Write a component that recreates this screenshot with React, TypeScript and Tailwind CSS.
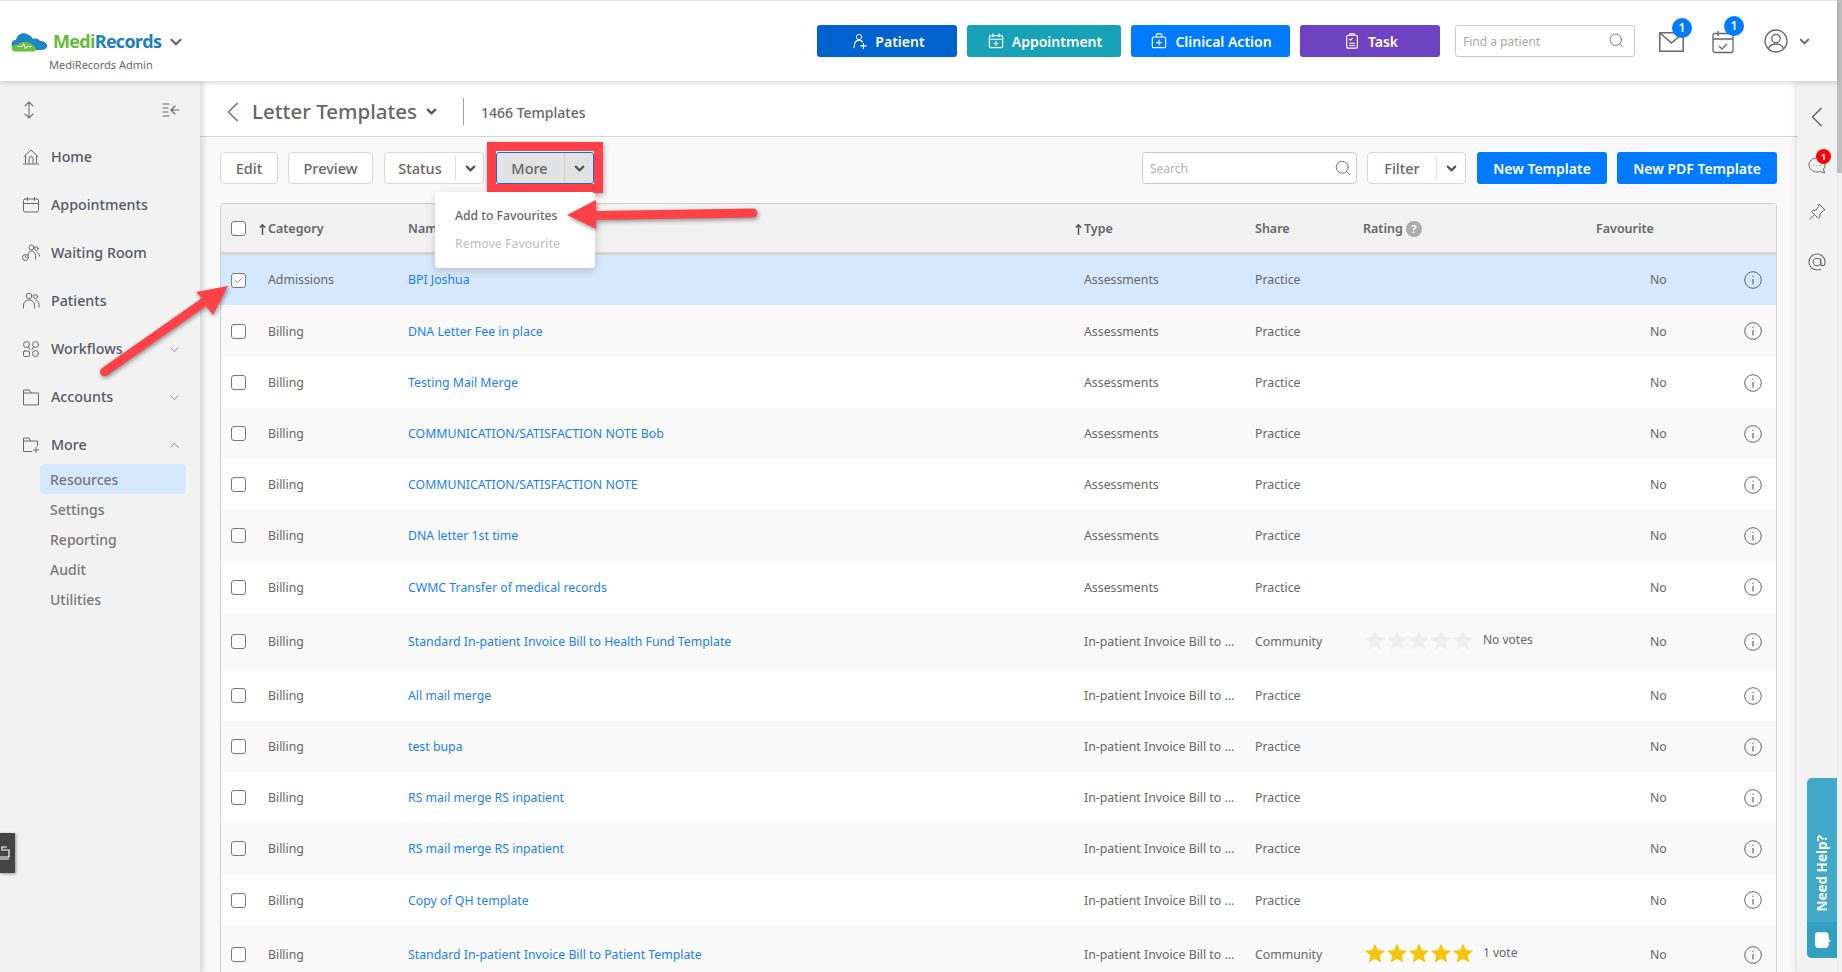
import { ChevronDown, ChevronUp, Search, Check } from "lucide-react";
import type { ReactNode } from "react";

type Row = {
  category: string;
  name: string;
  type: string;
  share: string;
  h: string;
  stars?: "none" | "full";
  striped?: boolean;
  active?: boolean;
};

const ASSESS = "Assessments";
const INV = "In-patient Invoice Bill to ...";

const rows: Row[] = [
  { category: "Admissions", name: "BPI Joshua", type: ASSESS, share: "Practice", h: "h-[50px]", active: true },
  { category: "Billing", name: "DNA Letter Fee in place", type: ASSESS, share: "Practice", h: "h-[52px]", striped: true },
  { category: "Billing", name: "Testing Mail Merge", type: ASSESS, share: "Practice", h: "h-[51px]" },
  { category: "Billing", name: "COMMUNICATION/SATISFACTION NOTE Bob", type: ASSESS, share: "Practice", h: "h-[51px]", striped: true },
  { category: "Billing", name: "COMMUNICATION/SATISFACTION NOTE", type: ASSESS, share: "Practice", h: "h-[51px]" },
  { category: "Billing", name: "DNA letter 1st time", type: ASSESS, share: "Practice", h: "h-[51px]", striped: true },
  { category: "Billing", name: "CWMC Transfer of medical records", type: ASSESS, share: "Practice", h: "h-[52px]" },
  { category: "Billing", name: "Standard In-patient Invoice Bill to Health Fund Template", type: INV, share: "Community", h: "h-[57px]", stars: "none", striped: true },
  { category: "Billing", name: "All mail merge", type: INV, share: "Practice", h: "h-[51px]" },
  { category: "Billing", name: "test bupa", type: INV, share: "Practice", h: "h-[51px]", striped: true },
  { category: "Billing", name: "RS mail merge RS inpatient", type: INV, share: "Practice", h: "h-[51px]" },
  { category: "Billing", name: "RS mail merge RS inpatient", type: INV, share: "Practice", h: "h-[51px]", striped: true },
  { category: "Billing", name: "Copy of QH template", type: INV, share: "Practice", h: "h-[52px]" },
  { category: "Billing", name: "Standard In-patient Invoice Bill to Patient Template", type: INV, share: "Community", h: "h-[57px]", stars: "full", striped: true },
];

const COLS = "grid grid-cols-[47px_140px_676px_171px_108px_233px_148px_31px] items-center";

function Ico({ children, w = 18, h = 18 }: { children: ReactNode; w?: number; h?: number }) {
  return (
    <svg width={w} height={h} viewBox="0 0 18 18" fill="none" stroke="currentColor" strokeWidth="1" strokeLinecap="round" strokeLinejoin="round" className="shrink-0">
      {children}
    </svg>
  );
}

const navIcons: Record<string, ReactNode> = {
  Home: (
    <Ico>
      <path d="M2 8.500 9 2l7 6.500M3.500 7.500V15M14.500 7.500V15M1.500 16h15M7 15v-4.500a2 2 0 0 1 4 0V15" />
    </Ico>
  ),
  Appointments: (
    <Ico>
      <rect x="1.500" y="3" width="15" height="13" rx="1.500" />
      <path d="M1.500 7.500h15M5.500 1.500v3M12.500 1.500v3" />
    </Ico>
  ),
  "Waiting Room": (
    <Ico>
      <circle cx="9.500" cy="3.500" r="2.500" />
      <circle cx="14.500" cy="4.500" r="1.800" />
      <path d="M6 12c0-3 1.500-5 3.500-5s4 1.500 4 4.500V15M15 8c1.500.5 2.500 1.700 2.500 4" />
      <circle cx="3.500" cy="13.500" r="3" />
      <path d="M3.500 12v1.500h1" />
    </Ico>
  ),
  Patients: (
    <Ico>
      <circle cx="7" cy="4" r="2.800" />
      <circle cx="13.500" cy="4.500" r="2" />
      <path d="M1.500 16v-3c0-3 2.500-5 5.500-5s5.500 2 5.500 5v3M13.500 8c2 .3 3.500 2 3.500 4.500V15" />
    </Ico>
  ),
  Workflows: (
    <Ico>
      <circle cx="4.500" cy="4.500" r="3" />
      <circle cx="13.500" cy="4.500" r="3" />
      <rect x="1.500" y="11" width="6" height="5.500" rx="1" />
      <circle cx="13.500" cy="13.500" r="3" />
      <path d="M6.500 7 8 9.500M11.500 7 10 9.500" />
    </Ico>
  ),
  Accounts: (
    <Ico>
      <path d="M1.500 16.500V2h6l1.500 3h7.500v11.500zM1.500 5H9" />
    </Ico>
  ),
  More: (
    <Ico>
      <path d="M10 15.500H1.500V2h5.500L8.500 5h7v5M1.500 5h7M14 11.500v5M11.500 14h5" />
    </Ico>
  ),
};

function HeadButton({ className, label, icon }: { className: string; label: string; icon: ReactNode }) {
  return (
    <div className={`h-8 flex items-center justify-center gap-[8px] pl-[2px] rounded-[3px] text-white text-[14px] font-semibold ${className}`}>
      {icon}
      <span>{label}</span>
    </div>
  );
}

function Star({ color }: { color: string }) {
  return (
    <svg width="22" height="22" viewBox="0 0 24 24" className={color}>
      <path fill="currentColor" d="M12 1.500l3.200 7.200 7.800.8-5.900 5.200 1.800 7.700L12 18.400l-6.900 4 1.800-7.700L1 9.500l7.800-.8z" />
    </svg>
  );
}

function Stars({ kind }: { kind: "none" | "full" }) {
  const color = kind === "full" ? "text-[#f5c50e]" : "text-[#eeeeee]";
  return (
    <div className="flex items-center -translate-y-[3px] ml-[1px]">
      <div className="flex">
        {[0, 1, 2, 3, 4].map((i) => (
          <Star key={i} color={color} />
        ))}
      </div>
      <span className="ml-[9px] text-[12px] text-[#666]">{kind === "full" ? "1 vote" : "No votes"}</span>
    </div>
  );
}

function InfoIcon() {
  return (
    <svg width="18" height="18" viewBox="0 0 18 18" fill="none" stroke="#666" strokeWidth="1">
      <circle cx="9" cy="9" r="8.300" />
      <path d="M9 8v5.500" strokeWidth="1.200" />
      <circle cx="9" cy="5.300" r="0.700" fill="#666" stroke="none" />
    </svg>
  );
}

function Box({ checked }: { checked?: boolean }) {
  return (
    <div className="w-[15px] h-[15px] ml-[10px] rounded-[3px] border border-[#777] bg-white flex items-center justify-center">
      {checked && <Check size={12} strokeWidth={1.200} className="text-[#555]" />}
    </div>
  );
}

function SortArrow() {
  return (
    <svg width="7" height="11" viewBox="0 0 7 11" fill="none" stroke="#555" strokeWidth="1.500" className="shrink-0">
      <path d="M3.500 11V1M.8 3.500 3.500.8l2.700 2.700" />
    </svg>
  );
}

function Btn({ label, className = "" }: { label: string; className?: string }) {
  return (
    <div className={`h-8 flex items-center justify-center pt-[1px] bg-white border border-[#d8d8d8] rounded-[4px] text-[14.500px] text-[#666] font-medium ${className}`}>
      {label}
    </div>
  );
}

function SplitBtn({ label, w, divider }: { label: string; w: string; divider: string }) {
  return (
    <div className={`h-8 flex bg-white border border-[#d8d8d8] rounded-[4px] text-[14.500px] text-[#666] font-medium ${w}`}>
      <div className={`${divider} flex items-center justify-center pt-[1px] border-r border-[#dddddd] my-[3px]`}>{label}</div>
      <div className="flex-1 flex items-center justify-center pl-[1px]">
        <ChevronDown size={15} strokeWidth={3.500} className="text-[#555]" />
      </div>
    </div>
  );
}

export default function App() {
  return (
    <div className="relative w-[1842px] h-[972px] overflow-hidden flex bg-white font-['Noto_Sans',sans-serif]">
      <div className="flex-1 min-w-0 flex flex-col">
        {/* Top bar */}
        <header className="relative z-20 h-[81px] shrink-0 flex items-center bg-white border-t border-[#e2e2e2] shadow-[0_1px_6px_rgba(0,0,0,0.2)]">
          <div className="ml-[11px] w-[180px] mt-[18px]">
            <div className="flex items-center h-[24px] mt-[1px]">
              <svg width="37" height="20" viewBox="0 0 37 20" className="shrink-0">
                <path fill="#1d86c4" d="M3 17C-1 14 0 8 5 8c1-5 6-8 11-6 3 1 5 3 6 5 3-1 6 0 7 2 5 0 8 3 7 6-1 2-3 3-5 3H8z" />
                <path fill="#6abf3c" d="M5 19.500c-3 0-5-2-4-4.500 1-2 3-3 6-2 1-2 4-3.500 8-3 4 0 7 2 9 5 2 2 1 4.500-2 4.500z" />
                <path fill="none" stroke="#fff" strokeWidth="1" d="M6 14.500h5l1.500-3 2 5.500 1.500-2.500h5" />
              </svg>
              <span className="ml-[5px] text-[18px] font-bold tracking-[-0.7px] text-[#1e7fbd] font-['Open_Sans',sans-serif]">
                <span className="text-[#64b93c]">Medi</span>Records
              </span>
              <ChevronDown size={18} strokeWidth={3} className="ml-[6px] text-[#666]" />
            </div>
            <div className="ml-[38px] mt-[4px] text-[11px] leading-[14px] text-[#666]">MediRecords Admin</div>
          </div>

          <div className="ml-auto flex items-center">
            <div className="flex items-center gap-[10px]">
              <HeadButton
                label="Patient"
                className="w-[140px] bg-[#0062cc]"
                icon={
                  <Ico w={16} h={18}>
                    <circle cx="9" cy="4.500" r="3" />
                    <path d="M3.500 16.500c0-5 1.500-8.500 5.500-8.500 1.500 0 3 .5 4 2M11 14.500h6M14 11.500v6" strokeWidth="1.300" />
                  </Ico>
                }
              />
              <HeadButton
                label="Appointment"
                className="w-[154px] bg-[#17a2b8]"
                icon={
                  <Ico w={16} h={16}>
                    <rect x="1.500" y="3" width="15" height="13.500" rx="1.500" strokeWidth="1.300" />
                    <path d="M1.500 7h15M5.500 1v3M12.500 1v3M9 9.500v4.500M6.800 11.800h4.400" strokeWidth="1.300" />
                  </Ico>
                }
              />
              <HeadButton
                label="Clinical Action"
                className="w-[159px] bg-[#007bff]"
                icon={
                  <Ico w={16} h={16}>
                    <rect x="1.500" y="4.500" width="15" height="12" rx="1.500" strokeWidth="1.300" />
                    <path d="M6 4.500V2a1 1 0 0 1 1-1h4a1 1 0 0 1 1 1v2.500M9 8v5.500M6.300 10.800h5.400" strokeWidth="1.300" />
                  </Ico>
                }
              />
              <HeadButton
                label="Task"
                className="w-[140px] bg-[#6f42c1]"
                icon={
                  <Ico w={16} h={16}>
                    <rect x="3" y="2.500" width="12" height="14.500" rx="1.500" strokeWidth="1.300" />
                    <path d="M6.500 2.500V1h5v1.500M6 7l1.200 1.300L9.500 5.800M6 11.500h6M6 14h6" strokeWidth="1.200" />
                  </Ico>
                }
              />
            </div>
            <div className="ml-[15px] w-[180px] h-8 flex items-center justify-between pl-[7px] pr-[9px] pt-[1px] border border-[#c9c9c9] rounded-[3px] text-[12px] text-[#a9a9a9]">
              <span>Find a patient</span>
              <Search size={17} strokeWidth={1.200} className="text-[#666] -mt-[2px]" />
            </div>
            <div className="relative ml-[24px] mt-[2px] text-[#666]">
              <svg width="25" height="20" viewBox="0 0 25 20" fill="none" stroke="currentColor" strokeWidth="1.500">
                <rect x="0.800" y="0.800" width="23.400" height="18.400" />
                <path d="M1 1l11.500 10L24 1" />
              </svg>
              <span className="absolute -top-[14px] left-[13px] w-5 h-5 flex items-center justify-center rounded-full bg-[#007bff] text-white text-[12px] font-semibold">1</span>
            </div>
            <div className="relative ml-[28px] mt-[2px] text-[#666]">
              <svg width="22" height="24" viewBox="0 0 22 24" fill="none" stroke="currentColor" strokeWidth="1.300">
                <rect x="1" y="3.500" width="20" height="19" rx="2" />
                <path d="M1 9h20M6 1v5M7 16l3 3 5-5" />
              </svg>
              <span className="absolute -top-[14px] left-[12px] w-5 h-5 flex items-center justify-center rounded-full bg-[#007bff] text-white text-[12px] font-semibold">1</span>
            </div>
            <svg width="24" height="24" viewBox="0 0 24 24" fill="none" stroke="#666" strokeWidth="1.300" className="ml-[30px]">
              <circle cx="12" cy="12" r="11" />
              <circle cx="12" cy="9.500" r="4.200" />
              <path d="M4.500 19.500c1-3 4-4.500 7.500-4.500s6.500 1.500 7.500 4.500" />
            </svg>
            <ChevronDown size={15} strokeWidth={3} className="ml-[9px] mr-[25px] text-[#666]" />
          </div>
        </header>

        <div className="flex-1 min-h-0 flex">
          {/* Sidebar */}
          <aside className="relative z-10 w-[200px] shrink-0 bg-[#f2f2f2] shadow-[3px_0_6px_rgba(0,0,0,0.14)]">
            <div className="h-[58px] flex items-center justify-between pl-[21px] pr-[20px]">
              <svg width="16" height="18" viewBox="0 0 16 18" fill="none" stroke="#777" strokeWidth="1.100" strokeLinecap="round" strokeLinejoin="round">
                <path d="M8 1v16M4 5l4-4 4 4M4 13l4 4 4-4" />
              </svg>
              <svg width="18" height="14" viewBox="0 0 18 14" fill="none" stroke="#666" strokeWidth="1.100" strokeLinecap="round" strokeLinejoin="round">
                <path d="M1 1h6M1 5h5M1 9h5M1 13h6M17 7H9.500M13 3 9 7l4 4" />
              </svg>
            </div>
            <nav className="mt-[-6px]">
              {["Home", "Appointments", "Waiting Room", "Patients", "Workflows", "Accounts", "More"].map((n) => (
                <div key={n} className="h-12 flex items-center pl-[22px] pr-[18px] text-[14.250px] font-medium text-[#535b66]">
                  <span className="text-[#6a6a6a]">{navIcons[n]}</span>
                  <span className="ml-[11px]">{n}</span>
                  {n === "Workflows" || n === "Accounts" ? (
                    <ChevronDown size={15} strokeWidth={1.200} className="ml-auto text-[#666]" />
                  ) : null}
                  {n === "More" ? <ChevronUp size={15} strokeWidth={1.200} className="ml-auto text-[#666]" /> : null}
                </div>
              ))}
            </nav>
            <div className="ml-[40px] w-[146px] mt-[-5px] text-[14px] text-[#777] font-medium">
              <div className="h-[30px] flex items-center pl-[10px] rounded-[4px] bg-[#d6e8fc]">Resources</div>
              <div className="h-[30px] flex items-center pl-[10px]">Settings</div>
              <div className="h-[30px] flex items-center pl-[10px]">Reporting</div>
              <div className="h-[30px] flex items-center pl-[10px]">Audit</div>
              <div className="h-[30px] flex items-center pl-[10px]">Utilities</div>
            </div>
          </aside>

          {/* Main */}
          <main className="flex-1 min-w-0 bg-[#f9f9f9] overflow-hidden">
            <div className="h-[56px] bg-white border-b border-[#d5d5d5] flex items-center pl-[27px] pt-[6px]">
              <svg width="12" height="20" viewBox="0 0 12 20" fill="none" stroke="#666" strokeWidth="1.300" className="shrink-0">
                <path d="M10.500 1 1.500 10l9 9" />
              </svg>
              <span className="ml-[13px] text-[20.500px] font-medium text-[#666]">Letter Templates</span>
              <ChevronDown size={15} strokeWidth={3.500} className="ml-[7px] text-[#555]" />
              <div className="ml-[24px] w-px h-[27px] bg-[#a89f95]" />
              <span className="ml-[17px] pt-[1px] text-[14px] font-medium text-[#666]">1466 Templates</span>
            </div>

            <div className="h-[66px] flex items-start pt-[15px] pl-[20px] pr-[20px]">
              <Btn label="Edit" className="w-[58px]" />
              <Btn label="Preview" className="w-[85px] ml-[10px]" />
              <div className="ml-[11px]">
                <SplitBtn label="Status" w="w-[100px]" divider="w-[71px]" />
              </div>
              <div className="relative ml-[12px] w-[98px] h-8">
                <div className="h-8 flex rounded-[3px] border border-[#0b6fd6] bg-[#e2e2e2] text-[14.500px] font-medium text-[#666]">
                  <div className="w-[68px] flex items-center justify-center pt-[1px] pr-[2px] border-r border-[#d0d0d0]">More</div>
                  <div className="flex-1 flex items-center justify-center pl-[1px]">
                    <ChevronDown size={15} strokeWidth={3.500} className="text-[#555]" />
                  </div>
                </div>
                <div className="absolute -left-[9px] -top-[10px] w-[116px] h-[51px] border-[9px] border-[#ff4048] shadow-[1px_2px_5px_rgba(0,0,0,0.35)]" />
                <div className="absolute z-10 -left-[61px] top-[40px] w-[160px] h-[76px] bg-white rounded-[4px] shadow-[0_3px_10px_rgba(0,0,0,0.16)] pl-[20px] pt-[15px] text-[12.200px] font-medium">
                  <div className="text-[#666] leading-[18px]">Add to Favourites</div>
                  <div className="mt-[10px] text-[#c4c4c4] leading-[18px]">Remove Favourite</div>
                </div>
              </div>

              <div className="ml-auto w-[215px] h-8 flex items-center justify-between pl-[7px] pr-[4px] pt-[1px] bg-white border border-[#c9c9c9] rounded-[4px] text-[12px] text-[#b0b0b0]">
                <span>Search</span>
                <Search size={18} strokeWidth={1.200} className="text-[#666] -mt-[2px]" />
              </div>
              <div className="ml-[10px]">
                <SplitBtn label="Filter" w="w-[99px]" divider="w-[69px]" />
              </div>
              <div className="ml-[11px] w-[130px] h-8 flex items-center justify-center rounded-[3px] bg-[#007bff] text-white text-[14px] font-semibold">New Template</div>
              <div className="ml-[10px] w-[160px] h-8 flex items-center justify-center rounded-[3px] bg-[#007bff] text-white text-[14px] font-semibold">New PDF Template</div>
            </div>

            {/* Table */}
            <div className="ml-[20px] mr-[20px] border-x border-t border-[#cfcfcf] rounded-t-[4px] text-[12.300px] text-[#666]">
              <div className={`${COLS} h-[51px] bg-[#f1f1f1] border-b-[3px] border-[#d5d5d5] font-semibold text-[12.500px]`}>
                <Box />
                <div className="flex items-center gap-[2px] -ml-[9px] pt-[2px]">
                  <SortArrow />
                  <span>Category</span>
                </div>
                <div className="pt-[2px]">Name</div>
                <div className="flex items-center gap-[2px] -ml-[9px] pt-[2px]">
                  <SortArrow />
                  <span>Type</span>
                </div>
                <div className="pt-[2px]">Share</div>
                <div className="flex items-center pt-[2px]">
                  <span>Rating</span>
                  <span className="ml-[3px] w-4 h-4 flex items-center justify-center rounded-full bg-[#adadad] text-white text-[11px] font-bold">?</span>
                </div>
                <div className="pt-[2px]">Favourite</div>
                <div />
              </div>
              {rows.map((r, i) => {
                const cell = r.active ? "" : "pt-[2px]";
                return (
                  <div
                    key={i}
                    className={`${COLS} ${r.h} ${r.active ? "bg-[#d6e8fc]" : r.striped ? "bg-[#f9f9f9]" : "bg-white"}`}
                  >
                    <Box checked={r.active} />
                    <div className={cell}>{r.category}</div>
                    <div className={`${cell} text-[#1a7ff5]`}>{r.name}</div>
                    <div className={cell}>{r.type}</div>
                    <div className={cell}>{r.share}</div>
                    <div className={cell}>{r.stars ? <Stars kind={r.stars} /> : null}</div>
                    <div className={`${cell} pl-[54px]`}>No</div>
                    <div><InfoIcon /></div>
                  </div>
                );
              })}
            </div>
          </main>

          {/* Right rail */}
          <aside className="relative z-10 w-[40px] shrink-0 bg-[#f2f2f2] shadow-[-2px_0_5px_rgba(0,0,0,0.1)] flex flex-col items-center text-[#666]">
            <svg width="12" height="20" viewBox="0 0 12 20" fill="none" stroke="currentColor" strokeWidth="1.500" className="mt-[26px]">
              <path d="M10.500 1 1.500 10l9 9" />
            </svg>
            <div className="relative mt-[30px]">
              <svg width="18" height="17" viewBox="0 0 18 17" fill="none" stroke="currentColor" strokeWidth="1">
                <path d="M9 1c4.500 0 8 2.800 8 7 0 1.500-.5 3-1.500 4l1 4-4-1.500C11 15 10 15 9 15c-4.500 0-8-3-8-7s3.500-7 8-7z" />
                <path d="M5.500 8.500h.8M8.700 8.500h.8M11.900 8.500h.8" />
              </svg>
              <span className="absolute -top-[8px] left-[8px] w-[15px] h-[15px] flex items-center justify-center rounded-full bg-[#ff0000] text-white text-[9px] font-bold">1</span>
            </div>
            <svg width="18" height="18" viewBox="0 0 18 18" fill="none" stroke="currentColor" strokeWidth="1" strokeLinejoin="round" className="mt-[29px]">
              <path d="M11 1l6 6-1.500.5-3.500 3.500-.5 3.500-1 1L3.500 8.500l1-1L8 7l2.500-3.500zM6.500 11.500 1.500 16.500" />
            </svg>
            <svg width="18" height="18" viewBox="0 0 18 18" fill="none" stroke="currentColor" strokeWidth="1.100" className="mt-[32px]">
              <circle cx="9" cy="9" r="3.800" />
              <path d="M12.800 5.500v5c0 1.500 1 2.300 2 2.300s2.200-1.300 2.200-4C17 4.500 13.500 1 9 1S1 4.500 1 9s3.500 8 8 8c1.500 0 3-.4 4-1.100" />
            </svg>
          </aside>
        </div>
      </div>

      {/* Page scrollbar */}
      <div className="w-[5px] shrink-0 bg-[#f1f1f1]">
        <div className="h-[173px] bg-[#c1c1c1]" />
      </div>

      {/* Need help tab */}
      <div className="absolute z-30 left-[1807px] top-[778px] w-[30px] h-[180px] rounded-l-[5px] overflow-hidden bg-[#43a9c9] flex flex-col justify-end">
        <div className="flex justify-center pb-[10px] pl-[1px]">
          <span className="[writing-mode:vertical-rl] rotate-180 text-[13.500px] leading-none font-bold text-white">Need Help?</span>
        </div>
        <div className="h-[36px] bg-[#34a0bf] flex items-center justify-center pl-[2px]">
          <svg width="18" height="18" viewBox="0 0 16 16" fill="#fff">
            <path d="M3 1h7a3 3 0 0 1 3 3v3l2 2-2 1v2a3 3 0 0 1-3 3H4a3 3 0 0 1-3-3V3a2 2 0 0 1 2-2z" />
          </svg>
        </div>
      </div>

      {/* Left tab */}
      <div className="absolute z-30 left-0 top-[833px] w-[15px] h-10 bg-[#444] shadow-[1px_1px_3px_rgba(0,0,0,0.4)] flex items-center justify-end pr-[5px]">
        <svg width="10" height="14" viewBox="0 0 10 14" fill="none" stroke="#fff" strokeWidth="1.200" className="shrink-0">
          <path d="M2 3V1h5M1 4h8v7H0M0 13h9" />
        </svg>
      </div>

      {/* Callout arrows */}
      <svg width="1842" height="972" viewBox="0 0 1842 972" className="absolute left-0 top-0 z-40 pointer-events-none drop-shadow-[1px_2px_2px_rgba(0,0,0,0.4)]">
        <path fill="#ff4248" d="M567 215 596 200 596 211 753 208.500a4.500 4.500 0 0 1 0 9L596 220 596 229z" />
        <path fill="#ff4248" d="M228 286 213 315 206 306 107 375.500a4.500 4.500 0 0 1-5-7.500L202 298 196 292z" />
      </svg>
    </div>
  );
}
